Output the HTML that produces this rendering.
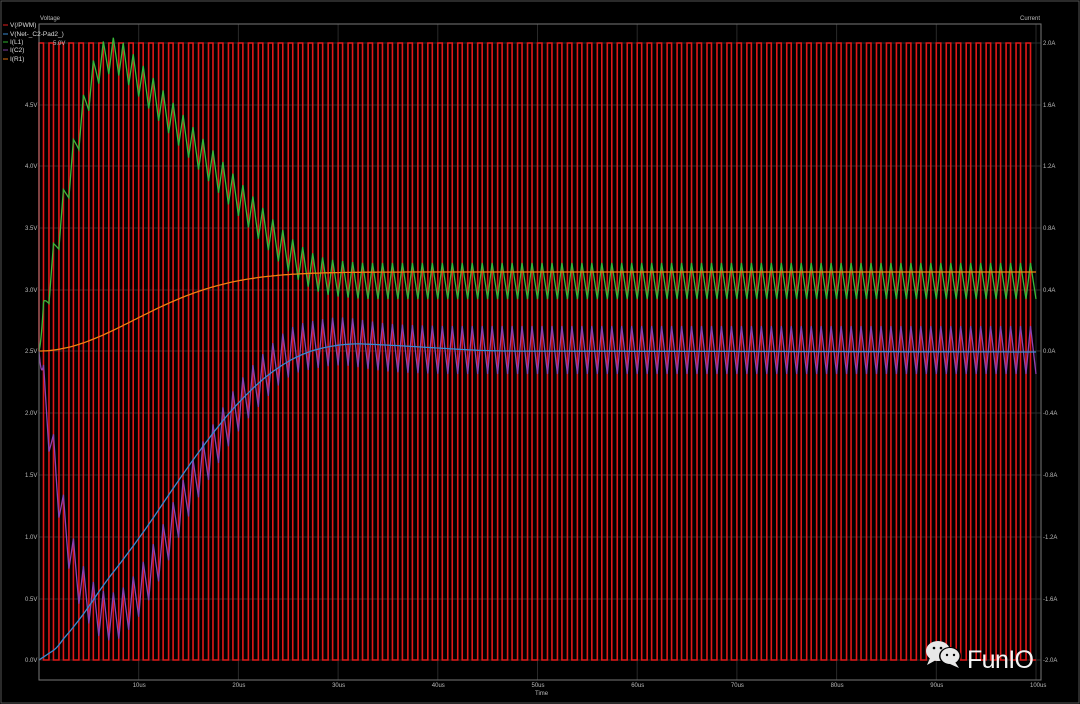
<!DOCTYPE html>
<html><head><meta charset="utf-8"><style>
html,body{margin:0;padding:0;background:#000;width:1080px;height:704px;overflow:hidden}
svg{display:block}
text{font-family:"Liberation Sans",sans-serif}
</style></head><body>
<svg id="s" width="1080" height="704" xmlns="http://www.w3.org/2000/svg">
<rect x="0" y="0" width="1080" height="704" fill="#000"/>
<rect x="1" y="1" width="1078" height="702" fill="none" stroke="#555" stroke-width="1"/>
<g id="grid"></g>
<g id="curves"></g>
<rect x="39" y="24" width="1002" height="656" fill="none" stroke="#777" stroke-width="1"/>
<g font-size="6" fill="#bbb" id="labels">
<text x="40" y="20">Voltage</text>
<text x="1020" y="20">Current</text>
<text x="535" y="695">Time</text>
</g>
<g font-size="6.5" fill="#ddd">
<line x1="3" y1="25" x2="8" y2="25" stroke="#e02020"/><text x="10" y="27">V(/PWM)</text>
<line x1="3" y1="34" x2="8" y2="34" stroke="#3a8ad0"/><text x="10" y="36">V(Net-_C2-Pad2_)</text>
<line x1="3" y1="42" x2="8" y2="42" stroke="#30b030"/><text x="10" y="44">I(L1)</text>
<line x1="3" y1="50" x2="8" y2="50" stroke="#8040a0"/><text x="10" y="52">I(C2)</text>
<line x1="3" y1="59" x2="8" y2="59" stroke="#e07010"/><text x="10" y="61">I(R1)</text>
</g>
<g>
<ellipse cx="938" cy="651" rx="12" ry="10" fill="#e8e8e8"/>
<path d="M930 658 L927 665 L936 660 Z" fill="#e8e8e8"/>
<ellipse cx="950" cy="656" rx="11" ry="9" fill="#000"/>
<ellipse cx="950" cy="656" rx="9.5" ry="8" fill="#e8e8e8"/>
<path d="M955 662 L959 668 L950 664 Z" fill="#e8e8e8"/>
<circle cx="934" cy="648" r="1.3" fill="#000"/><circle cx="941" cy="648" r="1.3" fill="#000"/>
<circle cx="947" cy="655" r="1.2" fill="#000"/><circle cx="954" cy="655" r="1.2" fill="#000"/>
<text x="967" y="668" font-size="25" fill="#f4f4f4" textLength="67">FunIO</text>
</g>
</svg>
<script>
var NS="http://www.w3.org/2000/svg";
function el(p,n,a){var e=document.createElementNS(NS,n);for(var k in a)e.setAttribute(k,a[k]);document.getElementById(p).appendChild(e);return e;}
function X(t){return 39+9.97*t;}
var ys=[43,105,166,228,290,351,413,475,537,599,660];
var vl=["5.0V","4.5V","4.0V","3.5V","3.0V","2.5V","2.0V","1.5V","1.0V","0.5V","0.0V"];
var al=["2.0A","1.6A","1.2A","0.8A","0.4A","0.0A","-0.4A","-0.8A","-1.2A","-1.6A","-2.0A"];
for(var i=0;i<ys.length;i++){
 el("grid","line",{x1:39,x2:1041,y1:ys[i],y2:ys[i],stroke:"#2a2a2a"});
 var t=el("labels","text",{x:i==0?53:25,y:ys[i]+2});t.textContent=vl[i];
 t=el("labels","text",{x:1043,y:ys[i]+2});t.textContent=al[i];
}
for(var k=1;k<=10;k++){
 var x=X(k*10);
 el("grid","line",{x1:x,x2:x,y1:24,y2:680,stroke:"#2a2a2a"});
 var t=el("labels","text",{x:x-6,y:687});t.textContent=(k*10)+"us";
}
var d="M"+X(0)+" 351";
for(var p=0;p<100;p++){var a=X(p),b=X(p+0.45),c=X(p+1);
 d+=" L"+a+" 43 L"+b+" 43 L"+b+" 660 L"+c+" 660";}
el("curves","path",{d:d,fill:"none",stroke:"#e01818","stroke-width":1.6});
function lin(pts,t){if(t<=pts[0][0])return pts[0][1];for(var i=0;i<pts.length-1;i++){if(t<=pts[i+1][0]){var f=(t-pts[i][0])/(pts[i+1][0]-pts[i][0]);return pts[i][1]+(pts[i+1][1]-pts[i][1])*f;}}return pts[pts.length-1][1];}
function sm(pts,t,w){if(t<w)w=Math.max(t,0.001);var s=0,n=0;for(var u=-w;u<=w+1e-9;u+=w/10){s+=lin(pts,t+u);n++;}return s/n;}
var G=[[0,351],[1,280],[3,180],[5,80],[7,45],[10,78],[15,140],[20,198],[25,255],[28,276],[32,281],[100,281]];
var P=[[0,351],[1,430],[2,500],[3,560],[5,605],[7,622],[9,610],[12,560],[15,490],[20,405],[25,350],[30,340],[35,348],[40,350],[100,350]];
function tri(t,amp){var ph=t-Math.floor(t);return ph<0.45?(-amp+2*amp*ph/0.45):(amp-2*amp*(ph-0.45)/0.55);}
var dg="",dp="";
for(var s=0;s<=100;s+=0.05){var amp=Math.min(1,s*2);
 var g=sm(G,s,1.5)-tri(s,18*amp), pp=sm(P,s,1.5)-tri(s,24*amp);
 dg+=(s==0?"M":" L")+X(s).toFixed(1)+" "+g.toFixed(1);
 dp+=(s==0?"M":" L")+X(s).toFixed(1)+" "+pp.toFixed(1);}
el("curves","path",{d:dp,fill:"none",stroke:"#9040b0","stroke-width":1.3});
el("curves","path",{d:dg,fill:"none",stroke:"#38b838","stroke-width":1.3});
var B=[[0,660],[3,640],[5,603],[10,540],[15,465],[20,400],[25,358],[30,343],[35,345],[45,351],[100,352]];
var db="",dor="";
for(var s=0;s<=100;s+=0.25){
 var o=351-79*(1-Math.exp(-Math.pow(s/13.5,2)));
 db+=(s==0?"M":" L")+X(s).toFixed(1)+" "+sm(B,s,2.5).toFixed(1);
 dor+=(s==0?"M":" L")+X(s).toFixed(1)+" "+o.toFixed(1);}
el("curves","path",{d:db,fill:"none",stroke:"#3a8ad0","stroke-width":1.3});
el("curves","path",{d:dor,fill:"none",stroke:"#f08010","stroke-width":1.3});
</script>
</body></html>
